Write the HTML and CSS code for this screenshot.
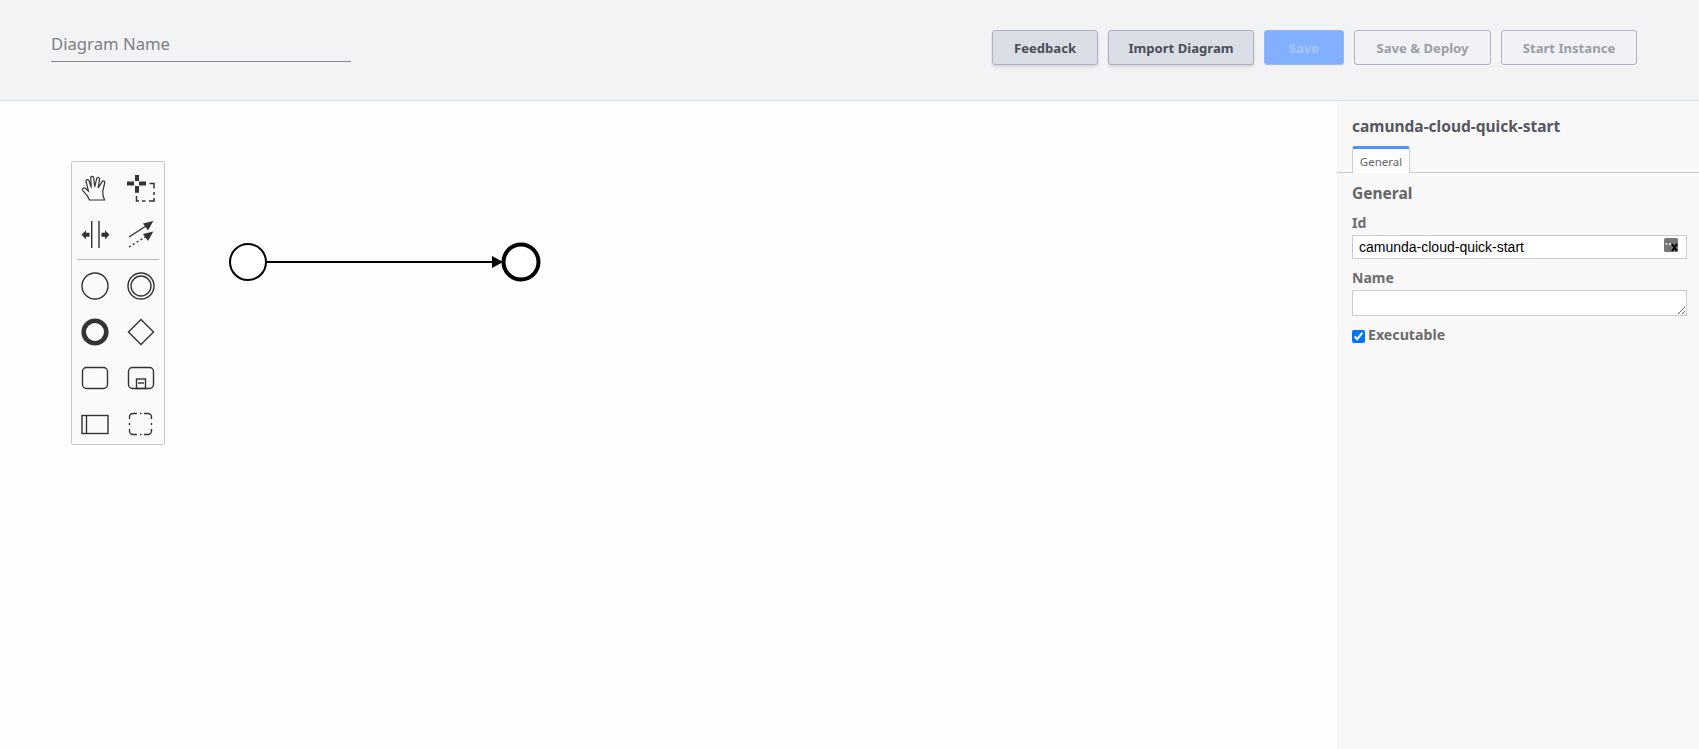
FILE: index.html
```html
<!DOCTYPE html>
<html lang="en">
<head>
    <meta charset="UTF-8">
    <title>Diagram</title>
    <link rel="stylesheet" href="styles.css">
</head>
<body>
<div class="header">
    <input class="diagram-name" type="text" placeholder="Diagram Name">
    <div class="actions">
        <button class="btn btn-secondary">Feedback</button>
        <button class="btn btn-secondary">Import Diagram</button>
        <button class="btn btn-primary">Save</button>
        <button class="btn btn-outline">Save &amp; Deploy</button>
        <button class="btn btn-outline">Start Instance</button>
    </div>
</div>
<div class="main">
    <div class="canvas">
        <!-- diagram -->
        <svg class="diagram" width="1337" height="648" viewBox="0 0 1337 648">
            <circle cx="248" cy="161" r="18" fill="#fff" stroke="#000" stroke-width="2"/>
            <path d="M266 161H498" fill="none" stroke="#000" stroke-width="2"/>
            <path d="M492 155L503 161L492 167Z" fill="#000"/>
            <circle cx="521" cy="161" r="17.5" fill="#fff" stroke="#000" stroke-width="4"/>
        </svg>
        <!-- palette -->
        <div class="palette">
            <div class="palette-group">
                <svg class="tool" viewBox="0 0 40 40">
                    <path class="line thin" d="M14.500 32C13 27.500 10.500 25.500 8 22.800C6.500 20.800 8.500 19 10.500 20.500L13.500 23L11 13.500C10.600 11.500 13.300 10.700 14 12.700L16.300 19.500L15.700 10C15.600 7.800 18.500 7.800 18.700 9.900L19.700 18.800L21.700 10.600C22.200 8.700 24.800 9.300 24.500 11.300L23.200 20L27.200 13.600C28.300 12 30.400 13 29.700 15L27.800 23C27.500 26.500 28 29 29.500 32Z"/>
                </svg>
                <svg class="tool" viewBox="0 0 40 40">
                    <path class="solid" d="M6 13.500H13V17.500H6ZM18 13.500H25V17.500H18ZM14 7H18V13H14ZM14 18H18V24.700H14Z"/>
                    <path class="line box" d="M28.500 15.500H33V20.500M33 24V27M33 30V33H28M24.500 33H21M18 33H15.500V28"/>
                </svg>
                <svg class="tool" viewBox="0 0 40 40">
                    <path class="line" d="M16.700 7V34M24 7V34"/>
                    <path class="solid" d="M6.500 20.700L11 16.200V18.700H14.500V22.700H11V25.200ZM34.500 20.700L30 16.200V18.700H26.500V22.700H30V25.200Z"/>
                </svg>
                <svg class="tool" viewBox="0 0 40 40">
                    <path class="line" d="M8 23L25 12"/>
                    <path class="solid" d="M32.300 7L27 16.500L22 9.500Z"/>
                    <path class="line dots" d="M8 33L25 22.500"/>
                    <path class="solid" d="M32.300 17.500L27 27L22 20Z"/>
                </svg>
            </div>
            <div class="palette-sep"></div>
            <div class="palette-group">
                <svg class="tool" viewBox="0 0 40 40"><circle class="line" cx="20" cy="20" r="13"/></svg>
                <svg class="tool" viewBox="0 0 40 40"><circle class="line" cx="20" cy="20" r="13"/><circle class="line" cx="20" cy="20" r="10"/></svg>
                <svg class="tool" viewBox="0 0 40 40"><circle class="line heavy" cx="20" cy="20" r="11.300"/></svg>
                <svg class="tool" viewBox="0 0 40 40"><path class="line" d="M20 7.500L32.500 20L20 32.500L7.500 20Z"/></svg>
                <svg class="tool" viewBox="0 0 40 40"><rect class="line" x="7.500" y="9.500" width="25" height="21" rx="4"/></svg>
                <svg class="tool" viewBox="0 0 40 40">
                    <rect class="line" x="7.500" y="9.500" width="25" height="21" rx="4"/>
                    <rect class="line" x="15.500" y="21" width="9" height="9.500"/>
                    <path class="line" d="M17 25H23"/>
                </svg>
                <svg class="tool" viewBox="0 0 40 40">
                    <rect class="line" x="7" y="11.500" width="26" height="18"/>
                    <path class="line" d="M11.500 11.500V29.500"/>
                </svg>
                <svg class="tool" viewBox="0 0 40 40">
                    <path class="line" d="M8.500 15V13A3.500 3.500 0 0 1 12 9.500H16M23 9.500H27A3.500 3.500 0 0 1 30.500 13V15M30.500 25V27A3.500 3.500 0 0 1 27 30.500H23M16 30.500H12A3.500 3.500 0 0 1 8.500 27V25M8.500 19V21M30.500 19V21M19 9.500H20.500M19 30.500H20.500"/>
                </svg>
            </div>
        </div>
    </div>
    <div class="sidebar">
        <div class="sidebar-title">camunda-cloud-quick-start</div>
        <div class="tabs">
            <div class="tab">General</div>
        </div>
        <div class="group">
            <div class="group-title">General</div>
            <label class="field-label field-first">Id</label>
            <div class="field">
                <input class="text-input" type="text" value="camunda-cloud-quick-start">
                <svg class="clear-icon" width="15" height="15" viewBox="0 0 15 15">
                    <rect x="0" y="0" width="14" height="14" rx="1.500" fill="#777"/>
                    <path d="M1.500 6H3.500M5 6H7" stroke="#eee" stroke-width="1.500" fill="none"/>
                    <path d="M8 6L13 13M13 6L8 13" stroke="#000" stroke-width="2" fill="none"/>
                </svg>
            </div>
            <label class="field-label">Name</label>
            <textarea class="text-area"></textarea>
            <label class="check-row">
                <input class="check" type="checkbox" checked>
                <span>Executable</span>
            </label>
        </div>
    </div>
</div>
</body>
</html>
```

FILE: styles.css
```css
* {
    box-sizing: border-box;
    margin: 0;
    padding: 0;
}

html, body {
    height: 100%;
    overflow: hidden;
}

body {
    display: flex;
    flex-direction: column;
    font-family: "Noto Sans", "Liberation Sans", sans-serif;
    background: #fdfdfd;
}

.header {
    height: 101px;
    flex-shrink: 0;
    display: flex;
    align-items: flex-start;
    justify-content: space-between;
    padding: 30px 62px 0 51px;
    background: #f2f3f5;
    border-bottom: 1px solid #d9dde6;
}

.diagram-name {
    width: 300px;
    height: 32px;
    padding-bottom: 4px;
    border: 0;
    border-bottom: 1px solid #888b90;
    background: transparent;
    font-family: inherit;
    font-size: 16.700px;
    outline: none;
}

.diagram-name::placeholder {
    color: #7d7f82;
}

.actions {
    display: flex;
    gap: 10px;
}

.btn {
    height: 35px;
    border-radius: 3px;
    font-family: inherit;
    font-size: 13.100px;
    font-weight: 700;
}

.btn-secondary {
    background: #d9dde5;
    border: 1px solid #abb1be;
    color: #4a4e58;
    box-shadow: 0 2px 3px rgba(0, 0, 0, 0.12);
}

.btn-secondary:nth-child(1) {
    width: 106px;
}

.btn-secondary:nth-child(2) {
    width: 146px;
}

.btn-primary {
    width: 80px;
    background: #82b0ff;
    border: 1px solid #8fb8ff;
    color: #a9c7ff;
}

.btn-outline {
    width: 137px;
    background: #f1f2f6;
    border: 1px solid #aeb5c5;
    color: #9b9ea6;
}

.btn-outline:last-child {
    width: 136px;
}

.main {
    flex: 1;
    display: flex;
    min-height: 0;
}

.canvas {
    flex: 1;
    position: relative;
    background: #fdfdfd;
}

.diagram {
    position: absolute;
    left: 0;
    top: 0;
}

.palette {
    position: absolute;
    left: 71px;
    top: 60px;
    width: 94px;
    padding: 6px 3px 0;
    height: 284px;
    background: #fafafa;
    border: 1px solid #c8c8c8;
    border-radius: 2px;
}

.palette-group {
    display: grid;
    grid-template-columns: 40px 40px;
    grid-auto-rows: 40px;
    gap: 6px;
}

.palette-sep {
    height: 1px;
    margin: 5px 2px 6px;
    background: #b9b9b9;
}

.tool {
    display: block;
    width: 40px;
    height: 40px;
}

.line {
    fill: none;
    stroke: #333;
    stroke-width: 1.400;
}

.thin {
    stroke-width: 1.200;
}

.heavy {
    stroke-width: 4.600;
}

.box {
    stroke-width: 1.500;
}

.dots {
    stroke-dasharray: 2 2.500;
}

.solid {
    fill: #333;
}

.sidebar {
    width: 362px;
    flex-shrink: 0;
    background: #f8f8f8;
    padding-top: 15px;
    color: #666;
}

.sidebar-title {
    padding-left: 15px;
    font-size: 15.500px;
    font-weight: 700;
    line-height: 20px;
    color: #55565f;
}

.tabs {
    display: flex;
    margin-top: 10px;
    padding-left: 15px;
    border-bottom: 1px solid #ccc;
    height: 27px;
}

.tab {
    width: 58px;
    height: 27px;
    background: #fdfdfd;
    border: 1px solid #ccc;
    border-top: 3px solid #4d90ff;
    border-bottom: 0;
    border-radius: 3px 3px 0 0;
    font-size: 11.500px;
    line-height: 25px;
    text-align: center;
    color: #666;
}

.group {
    padding: 10px 12px 0 15px;
}

.group-title {
    font-size: 15.500px;
    font-weight: 700;
    line-height: 20px;
    color: #666;
}

.field-label {
    display: block;
    margin-top: 9px;
    font-size: 14px;
    font-weight: 700;
    line-height: 19px;
    color: #6c6c6c;
}

.field-first {
    margin-top: 10px;
}

.field {
    position: relative;
    margin-top: 3px;
}

.text-input {
    display: block;
    width: 100%;
    height: 24px;
    padding: 0 6px;
    border: 1px solid #ccc;
    background: #fff;
    font-family: "Liberation Sans", sans-serif;
    font-size: 14px;
    color: #000;
    outline: none;
}

.clear-icon {
    position: absolute;
    right: 8px;
    top: 3px;
}

.text-area {
    display: block;
    width: 100%;
    height: 26px;
    margin-top: 3px;
    border: 1px solid #ccc;
    background: #fff;
    outline: none;
}

.check-row {
    display: flex;
    align-items: center;
    gap: 3px;
    margin-top: 9px;
    font-size: 14.200px;
    font-weight: 700;
    line-height: 19px;
    color: #6c6c6c;
}

.check {
    width: 13px;
    height: 13px;
    margin: 4px 0 0;
}
```
